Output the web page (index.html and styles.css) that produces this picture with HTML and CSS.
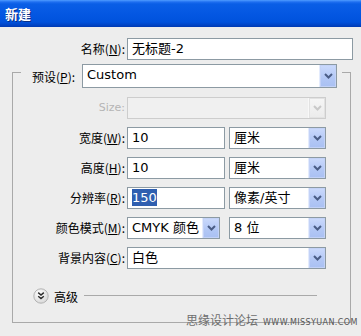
FILE: index.html
```html
<!DOCTYPE html>
<html lang="zh">
<head>
<meta charset="utf-8">
<title>新建</title>
<link rel="stylesheet" href="styles.css">
</head>
<body>
<div class="window">
  <div class="titlebar"><span class="title">新建</span></div>
  <div class="name-row">
    <label class="lbl">名称(<u>N</u>):</label>
    <div class="field w-name">无标题-2</div>
  </div>
  <div class="group">
    <div class="group-head">
      <label class="head-lbl">预设(<u>P</u>):</label>
      <div class="select w-preset"><span class="val">Custom</span><span class="btn"><svg width="9" height="6" viewBox="0 0 9 6"><path d="M1 1 L4.5 4.5 L8 1" fill="none" stroke="#4a5d86" stroke-width="2"/></svg></span></div>
    </div>
    <div class="rows">
      <div class="row">
        <label class="lbl disabled">Size:</label>
        <div class="select w-full is-disabled"><span class="val"></span><span class="btn"><svg width="9" height="6" viewBox="0 0 9 6"><path d="M1 1 L4.5 4.5 L8 1" fill="none" stroke="#c9c9c9" stroke-width="2"/></svg></span></div>
      </div>
      <div class="row">
        <label class="lbl">宽度(<u>W</u>):</label>
        <div class="field w-num">10</div>
        <div class="select w-unit"><span class="val">厘米</span><span class="btn"><svg width="9" height="6" viewBox="0 0 9 6"><path d="M1 1 L4.5 4.5 L8 1" fill="none" stroke="#4a5d86" stroke-width="2"/></svg></span></div>
      </div>
      <div class="row">
        <label class="lbl">高度(<u>H</u>):</label>
        <div class="field w-num">10</div>
        <div class="select w-unit"><span class="val">厘米</span><span class="btn"><svg width="9" height="6" viewBox="0 0 9 6"><path d="M1 1 L4.5 4.5 L8 1" fill="none" stroke="#4a5d86" stroke-width="2"/></svg></span></div>
      </div>
      <div class="row">
        <label class="lbl">分辨率(<u>R</u>):</label>
        <div class="field w-num"><span class="sel">150</span></div>
        <div class="select w-unit"><span class="val">像素/英寸</span><span class="btn"><svg width="9" height="6" viewBox="0 0 9 6"><path d="M1 1 L4.5 4.5 L8 1" fill="none" stroke="#4a5d86" stroke-width="2"/></svg></span></div>
      </div>
      <div class="row">
        <label class="lbl">颜色模式(<u>M</u>):</label>
        <div class="select w-mode"><span class="val">CMYK 颜色</span><span class="btn"><svg width="9" height="6" viewBox="0 0 9 6"><path d="M1 1 L4.5 4.5 L8 1" fill="none" stroke="#4a5d86" stroke-width="2"/></svg></span></div>
        <div class="select w-unit"><span class="val">8 位</span><span class="btn"><svg width="9" height="6" viewBox="0 0 9 6"><path d="M1 1 L4.5 4.5 L8 1" fill="none" stroke="#4a5d86" stroke-width="2"/></svg></span></div>
      </div>
      <div class="row">
        <label class="lbl">背景内容(<u>C</u>):</label>
        <div class="select w-full"><span class="val">白色</span><span class="btn"><svg width="9" height="6" viewBox="0 0 9 6"><path d="M1 1 L4.5 4.5 L8 1" fill="none" stroke="#4a5d86" stroke-width="2"/></svg></span></div>
      </div>
    </div>
    <div class="advanced">
      <svg class="adv-icon" width="16" height="16" viewBox="0 0 16 16">
        <defs>
          <radialGradient id="g" cx="0.4" cy="0.35" r="0.7">
            <stop offset="0" stop-color="#ffffff"/>
            <stop offset="1" stop-color="#d6d6d6"/>
          </radialGradient>
        </defs>
        <circle cx="8" cy="8" r="7.2" fill="url(#g)" stroke="#b3b3b3"/>
        <path d="M5.2 4.6 L8 7 L10.8 4.6 M5.2 8.2 L8 10.6 L10.8 8.2" fill="none" stroke="#2b2b2b" stroke-width="1.5"/>
      </svg>
      <span class="adv-text">高级</span>
      <span class="adv-line"></span>
    </div>
  </div>
  <div class="watermark"><span class="wm-cn">思缘设计论坛</span><span class="wm-en">WWW.MISSYUAN.COM</span></div>
</div>
</body>
</html>
```

FILE: styles.css
```css
html, body {
  margin: 0;
  padding: 0;
}
body {
  background: #ededed;
  font-family: "DejaVu Sans", "Noto Sans CJK SC", sans-serif;
  font-size: 12px;
  color: #000;
}
.window {
  position: relative;
  width: 361px;
  height: 336px;
  background: #ededed;
  overflow: hidden;
}
.titlebar {
  height: 27px;
  display: flex;
  align-items: center;
  padding-left: 5px;
  background: linear-gradient(to bottom, #4f9cff 0, #1f6ff0 2px, #0a5ee6 4px, #0457e2 14px, #0052dc 22px, #0044c6 25px, #003ab2 27px);
}
.title {
  color: #fff;
  font-family: "Noto Sans CJK SC", sans-serif;
  font-weight: bold;
  font-size: 13px;
  text-shadow: 1px 1px 0 #0a2f86;
}
.lbl {
  display: block;
  text-align: right;
  font-family: "Noto Sans CJK SC", sans-serif;
  font-size: 12px;
  line-height: 22px;
  white-space: nowrap;
}
.lbl u, .head-lbl u {
  text-decoration: underline;
  text-underline-offset: 1px;
}
.lbl.disabled {
  color: #b5b5b5;
  font-family: "DejaVu Sans", sans-serif;
  font-size: 11px;
}
.name-row {
  display: flex;
  margin-top: 11px;
  height: 22px;
}
.name-row .lbl {
  width: 125px;
  margin-right: 2px;
}
.field {
  box-sizing: border-box;
  height: 22px;
  border: 1px solid #8c9aa3;
  background: #fff;
  padding-left: 4px;
  line-height: 20px;
  font-size: 13px;
  font-family: "DejaVu Sans", "Noto Sans CJK SC", sans-serif;
  white-space: nowrap;
  overflow: hidden;
}
.field .sel {
  background: #2f5fb0;
  color: #fff;
  padding: 1px 0;
}
.w-name { width: 226px; }
.w-num { width: 98px; margin-right: 4px; }
.group {
  box-sizing: border-box;
  margin-top: 12px;
  margin-left: 12px;
  width: 339px;
  height: 251px;
  border: 1px solid #a9a9a9;
}
.group-head {
  display: flex;
  align-items: center;
  width: max-content;
  margin-top: -9px;
  margin-left: 8px;
  padding: 0 5px 0 11px;
  background: #ededed;
}
.head-lbl {
  font-family: "Noto Sans CJK SC", sans-serif;
  font-size: 12px;
  width: 47px;
  margin-right: 3px;
  white-space: nowrap;
}
.select {
  box-sizing: border-box;
  height: 22px;
  border: 1px solid #8c9aa3;
  background: #fff;
  display: flex;
  align-items: stretch;
}
.select .val {
  flex: 1;
  padding-left: 4px;
  line-height: 20px;
  font-size: 13px;
  font-family: "DejaVu Sans", "Noto Sans CJK SC", sans-serif;
  white-space: nowrap;
  overflow: hidden;
}
.select .btn {
  width: 16px;
  display: flex;
  align-items: center;
  justify-content: center;
  background: linear-gradient(to bottom, #cbdafc, #b2c7f5 60%, #a9c0f2);
  border-left: 1px solid #e3ebfd;
  box-shadow: inset 0 0 0 1px #c3d2f7;
}
.select.is-disabled {
  border-color: #cdcdcd;
  background: #f0f0f0;
}
.select.is-disabled .btn {
  background: linear-gradient(to bottom, #f6f6f6, #ebebeb);
  border-left: 1px solid #f8f8f8;
  box-shadow: inset 0 0 0 1px #e2e2e2;
}
.w-preset { width: 255px; height: 24px; }
.w-full { width: 199px; }
.w-unit { width: 97px; margin-left: 0; }
.w-mode { width: 93px; margin-right: 9px; }
.rows {
  display: flex;
  flex-direction: column;
  gap: 8px;
  margin-top: 9px;
}
.row {
  display: flex;
  height: 22px;
}
.row .lbl {
  width: 112px;
  margin-right: 2px;
}
.advanced {
  display: flex;
  align-items: center;
  margin-top: 19px;
  margin-left: 20px;
  height: 16px;
}
.adv-icon {
  display: block;
}
.adv-text {
  font-family: "Noto Sans CJK SC", sans-serif;
  font-size: 12px;
  margin-left: 5px;
}
.adv-line {
  width: 233px;
  height: 1px;
  background: #a9a9a9;
  margin-left: 6px;
  margin-top: -2px;
}
.watermark {
  position: absolute;
  left: 186px;
  top: 311px;
  display: flex;
  align-items: baseline;
  gap: 5px;
}
.wm-cn {
  font-family: "Noto Sans CJK SC", sans-serif;
  font-size: 12px;
  color: #6e6e6e;
}
.wm-en {
  font-family: "DejaVu Sans", sans-serif;
  font-size: 8px;
  color: #555;
  letter-spacing: 0.4px;
}
```
